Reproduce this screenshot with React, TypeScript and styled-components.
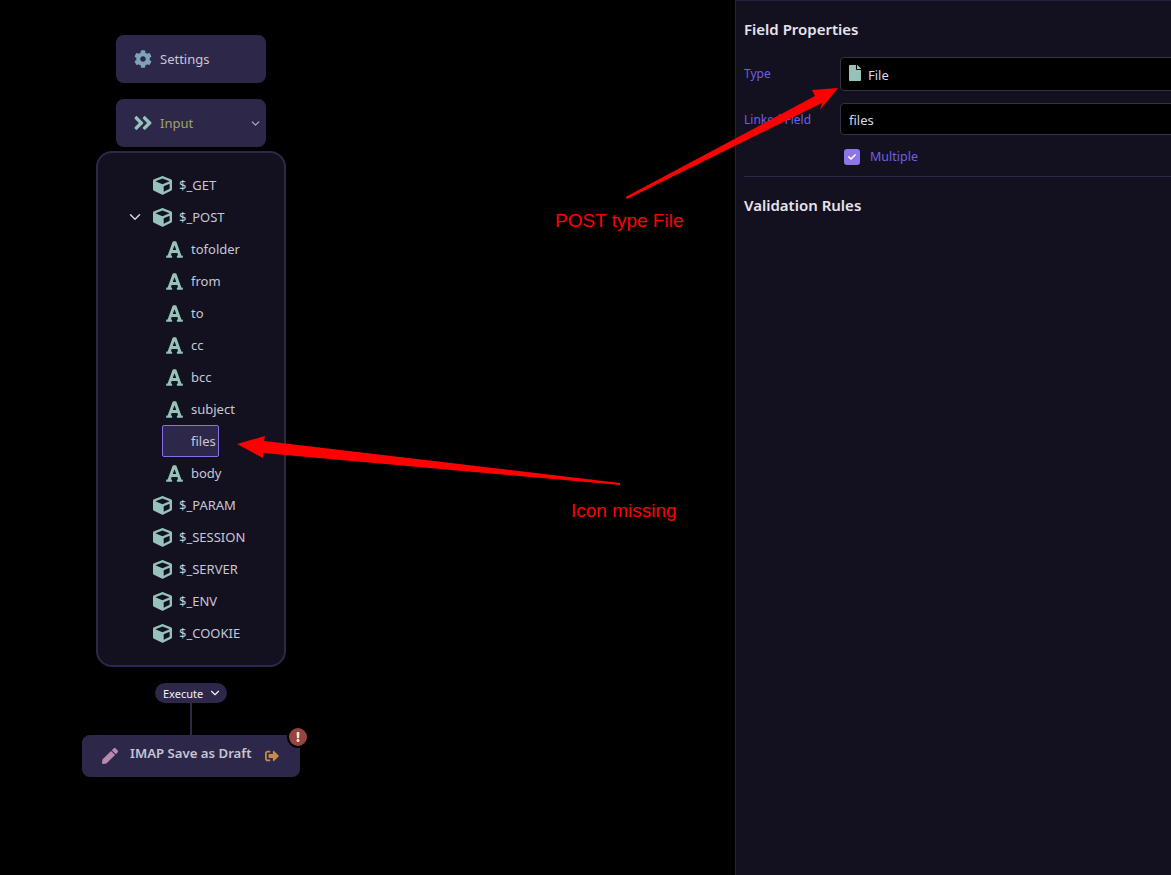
import React from "react";
import styled, { createGlobalStyle } from "styled-components";
import { FaCog, FaAngleDoubleRight, FaCube, FaFont, FaPen, FaFile, FaSignOutAlt, FaExclamation, FaCheck } from "react-icons/fa";
import { ChevronDown } from "lucide-react";

const Global = createGlobalStyle`
  html, body { margin: 0; padding: 0; background: #000; overflow: hidden; height: 875px; }
  body { font-family: "Noto Sans", "Open Sans", sans-serif; }
`;

const Page = styled.div`
  position: relative;
  display: flex;
  width: 1171px;
  height: 875px;
  overflow: hidden;
  background: #000;
`;

const Canvas = styled.div`
  flex: 0 0 735px;
  box-sizing: border-box;
  padding-top: 35px;
  padding-right: 353px;
  display: flex;
  flex-direction: column;
  align-items: center;
`;

const NodeButton = styled.div<{ $tone: string; $tight?: boolean }>`
  box-sizing: border-box;
  width: 150px;
  height: 48px;
  margin-bottom: ${(p) => (p.$tight ? 4 : 16)}px;
  padding: 0 4px 0 18px;
  display: flex;
  align-items: center;
  gap: 8px;
  border-radius: 8px;
  background: #2d2849;
  font-size: 13px;
  color: ${(p) => p.$tone};
  svg { flex: none; }
`;

const DoubleArrow = styled.span`
  display: flex;
  margin: 0 -2px;
  color: #97c2ba;
`;

const Grow = styled.span`
  flex: 1;
`;

const Group = styled.div`
  box-sizing: border-box;
  width: 190px;
  height: 516px;
  padding-top: 16px;
  border: 2px solid #2d2849;
  border-radius: 16px;
  background: #13111f;
`;

const Row = styled.div<{ $depth: number }>`
  box-sizing: border-box;
  height: 32px;
  display: flex;
  align-items: center;
  gap: ${(p) => (p.$depth ? 6 : 7)}px;
  padding-left: ${(p) => (p.$depth ? 66 : 55)}px;
  position: relative;
  font-size: 13px;
  color: #c9c6d6;
`;

const Selected = styled.span`
  position: absolute;
  left: 64px;
  top: 0;
  width: 57px;
  height: 32px;
  box-sizing: border-box;
  border: 1px solid #8b6fe8;
  border-radius: 2px;
  background: #2d2849;
`;

const RowText = styled.span`
  position: relative;
`;

const IconSlot = styled.span<{ $wide?: boolean }>`
  width: ${(p) => (p.$wide ? 21 : 19)}px;
  height: 20px;
  flex: none;
  display: flex;
  align-items: center;
  justify-content: center;
  color: #97c2ba;
`;

const Caret = styled.span`
  position: absolute;
  left: 28px;
  top: 7px;
  color: #d5d3e0;
  display: flex;
`;

const ExecutePill = styled.div`
  margin-top: 16px;
  box-sizing: border-box;
  width: 72px;
  height: 20px;
  border-radius: 10px;
  background: #2d2849;
  color: #f1f0f6;
  font-size: 11px;
  display: flex;
  align-items: center;
  padding-left: 8px;
  gap: 5px;
`;

const Wire = styled.div`
  width: 2px;
  height: 32px;
  background: #2d2849;
`;

const ActionNode = styled.div`
  position: relative;
  box-sizing: border-box;
  width: 218px;
  height: 42px;
  border-radius: 8px;
  background: #2d2849;
  display: flex;
  align-items: center;
  padding-left: 20px;
  color: #c7c4d4;
`;

const ActionTitle = styled.span`
  margin: -6px 13px 0 12px;
  font-size: 13.2px;
  font-weight: 600;
  white-space: nowrap;
`;

const Badge = styled.span`
  position: absolute;
  right: -9px;
  top: -9px;
  width: 18px;
  height: 18px;
  border-radius: 50%;
  background: #96453e;
  border: 2px solid #000;
  color: #efe5e3;
  display: flex;
  align-items: center;
  justify-content: center;
`;

const Panel = styled.aside`
  flex: 0 0 520px;
  box-sizing: border-box;
  background: #13111f;
  border-left: 1px solid #26223c;
  border-top: 1px solid #26223c;
  padding: 18px 8px 0;
`;

const Heading = styled.h3`
  margin: 0;
  font-size: 15px;
  line-height: 20px;
  font-weight: 600;
  color: #e6e4ee;
`;

const FieldRow = styled.div<{ $height: number; $top: number }>`
  display: grid;
  grid-template-columns: 96px 1fr;
  margin-top: ${(p) => p.$top}px;
  height: ${(p) => p.$height}px;
`;

const FieldLabel = styled.label`
  font-size: 12px;
  line-height: 20px;
  padding-top: 7px;
  color: #6f5fe8;
`;

const InputBox = styled.div`
  box-sizing: border-box;
  height: 100%;
  background: #000;
  border: 1px solid #35323f;
  border-radius: 4px;
  display: flex;
  align-items: center;
  gap: 5px;
  padding: 2px 0 0 8px;
  font-size: 13px;
  color: #d9d7e2;
`;

const FileGlyph = styled.span`
  color: #97c2ba;
  display: flex;
  margin: -4px 0 0 -2px;
`;

const CheckRow = styled.div`
  margin: 13px 0 0 100px;
  display: flex;
  align-items: center;
  gap: 10px;
  font-size: 12.5px;
  color: #6f5fe8;
`;

const CheckBox = styled.span`
  width: 16px;
  height: 16px;
  border-radius: 3px;
  background: #8e76e8;
  color: #fff;
  display: flex;
  align-items: center;
  justify-content: center;
`;

const Divider = styled.hr`
  margin: 11px 0 18px;
  border: 0;
  border-top: 1px solid #2d2849;
`;

const Overlay = styled.svg`
  position: absolute;
  inset: 0;
  pointer-events: none;
`;

const Note = styled.span<{ $x: number; $y: number }>`
  position: absolute;
  left: ${(p) => p.$x}px;
  top: ${(p) => p.$y}px;
  font-family: "Liberation Sans", Arial, sans-serif;
  font-size: 19px;
  line-height: 20px;
  color: #fe0000;
  white-space: nowrap;
`;

const children = ["tofolder", "from", "to", "cc", "bcc", "subject", "files", "body"];
const afterPost = ["$_PARAM", "$_SESSION", "$_SERVER", "$_ENV", "$_COOKIE"];

const CubeRow = ({ label, open }: { label: string; open?: boolean }) => (
  <Row $depth={0}>
    {open && (
      <Caret>
        <ChevronDown size={18} />
      </Caret>
    )}
    <IconSlot>
      <FaCube size={19} />
    </IconSlot>
    <RowText>{label}</RowText>
  </Row>
);

export default function App() {
  return (
    <Page>
      <Global />
      <Canvas>
        <NodeButton $tone="#c9c6d6">
          <FaCog size={18} color="#7ea3b8" />
          <span>Settings</span>
        </NodeButton>
        <NodeButton $tone="#a3a06c" $tight>
          <DoubleArrow>
            <FaAngleDoubleRight size={22} />
          </DoubleArrow>
          <Grow>Input</Grow>
          <ChevronDown size={13} color="#b5b2c4" />
        </NodeButton>
        <Group>
          <CubeRow label="$_GET" />
          <CubeRow label="$_POST" open />
          {children.map((c) => (
            <Row key={c} $depth={1}>
              {c === "files" && <Selected />}
              <IconSlot $wide>{c !== "files" && <FaFont size={19} />}</IconSlot>
              <RowText>{c}</RowText>
            </Row>
          ))}
          {afterPost.map((c) => (
            <CubeRow key={c} label={c} />
          ))}
        </Group>
        <ExecutePill>
          <span>Execute</span>
          <ChevronDown size={14} />
        </ExecutePill>
        <Wire />
        <ActionNode>
          <FaPen size={16} color="#b78bb0" />
          <ActionTitle>IMAP Save as Draft</ActionTitle>
          <FaSignOutAlt size={14} color="#c98a45" />
          <Badge>
            <FaExclamation size={10} />
          </Badge>
        </ActionNode>
      </Canvas>
      <Panel>
        <Heading>Field Properties</Heading>
        <FieldRow $height={34} $top={18}>
          <FieldLabel>Type</FieldLabel>
          <InputBox>
            <FileGlyph>
              <FaFile size={16} />
            </FileGlyph>
            File
          </InputBox>
        </FieldRow>
        <FieldRow $height={32} $top={12}>
          <FieldLabel>Linked Field</FieldLabel>
          <InputBox>files</InputBox>
        </FieldRow>
        <CheckRow>
          <CheckBox>
            <FaCheck size={8} />
          </CheckBox>
          Multiple
        </CheckRow>
        <Divider />
        <Heading>Validation Rules</Heading>
      </Panel>
      <Overlay width="1171" height="875" viewBox="0 0 1171 875">
        <polygon points="625.5,197 815,96 812,90 838,88 820,110 822,103 627,199" fill="#fe0000" />
        <polygon points="237,444 265,436 264,441 620,483 620,485 263,453 263,458" fill="#fe0000" />
      </Overlay>
      <Note $x={555} $y={211}>POST type File</Note>
      <Note $x={571} $y={501}>Icon missing</Note>
    </Page>
  );
}
